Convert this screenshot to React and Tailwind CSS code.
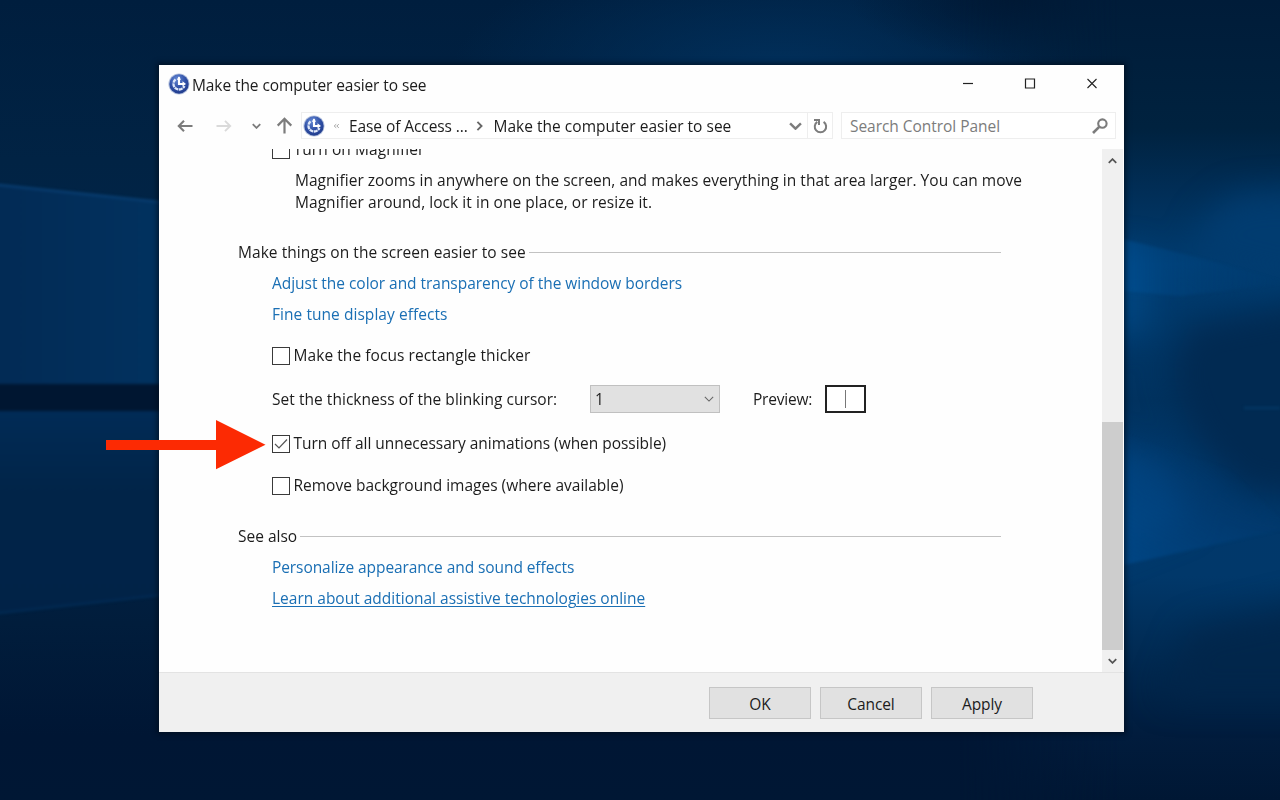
function Wallpaper() {
  return (
    <svg className="absolute inset-0 h-full w-full" viewBox="0 0 1280 800" preserveAspectRatio="none" aria-hidden="true">
      <defs>
        <linearGradient id="base" x1="0" y1="0" x2="0" y2="1">
          <stop offset="0" stopColor="#001e3e" />
          <stop offset="0.2" stopColor="#012344" />
          <stop offset="0.5" stopColor="#01264c" />
          <stop offset="0.78" stopColor="#011d3c" />
          <stop offset="0.92" stopColor="#001634" />
          <stop offset="1" stopColor="#001734" />
        </linearGradient>
        <linearGradient id="leftBeam" x1="0" y1="0" x2="1" y2="0">
          <stop offset="0" stopColor="#022a54" />
          <stop offset="1" stopColor="#013260" />
        </linearGradient>
        <linearGradient id="lowBeam" x1="0" y1="0" x2="0" y2="1">
          <stop offset="0" stopColor="#012b56" />
          <stop offset="0.4" stopColor="#012448" />
          <stop offset="1" stopColor="#012247" />
        </linearGradient>
        <linearGradient id="rightSky" x1="0" y1="0" x2="0" y2="1">
          <stop offset="0" stopColor="#001c39" />
          <stop offset="0.16" stopColor="#00223f" />
          <stop offset="0.24" stopColor="#012e57" />
          <stop offset="0.33" stopColor="#013c70" />
          <stop offset="0.5" stopColor="#01325f" />
          <stop offset="0.6" stopColor="#01386b" />
          <stop offset="0.72" stopColor="#01386a" />
          <stop offset="0.82" stopColor="#012a52" />
          <stop offset="0.92" stopColor="#011c3d" />
          <stop offset="1" stopColor="#001734" />
        </linearGradient>
        <linearGradient id="fadeIn" gradientUnits="userSpaceOnUse" x1="960" y1="0" x2="1120" y2="0">
          <stop offset="0" stopColor="#000" />
          <stop offset="1" stopColor="#fff" />
        </linearGradient>
        <mask id="rightMask" maskUnits="userSpaceOnUse" x="0" y="0" width="1280" height="800">
          <rect x="960" width="320" height="800" fill="url(#fadeIn)" />
        </mask>
        <linearGradient id="upperRay" x1="0" y1="0" x2="1" y2="0">
          <stop offset="0" stopColor="#00559c" />
          <stop offset="1" stopColor="#01407a" stopOpacity="0" />
        </linearGradient>
        <linearGradient id="lowerRay" gradientUnits="userSpaceOnUse" x1="1130" y1="565" x2="1200" y2="440">
          <stop offset="0" stopColor="#004d92" />
          <stop offset="0.5" stopColor="#01427f" stopOpacity="0.7" />
          <stop offset="1" stopColor="#01386b" stopOpacity="0" />
        </linearGradient>
        <radialGradient id="topGlow" cx="0.5" cy="0.5" r="0.5">
          <stop offset="0" stopColor="#01305c" />
          <stop offset="1" stopColor="#01305c" stopOpacity="0" />
        </radialGradient>
        <radialGradient id="cornerShade" cx="0.5" cy="0.5" r="0.5">
          <stop offset="0" stopColor="#001630" stopOpacity="0.8" />
          <stop offset="1" stopColor="#001630" stopOpacity="0" />
        </radialGradient>
        <filter id="soft" filterUnits="userSpaceOnUse" x="1000" y="0" width="400" height="900" colorInterpolationFilters="sRGB">
          <feGaussianBlur stdDeviation="16" />
        </filter>
        <filter id="edge" filterUnits="userSpaceOnUse" x="-50" y="-50" width="1400" height="900" colorInterpolationFilters="sRGB">
          <feGaussianBlur stdDeviation="1.4" />
        </filter>
      </defs>
      <rect width="1280" height="800" fill="url(#base)" />
      <ellipse cx="780" cy="75" rx="330" ry="130" fill="url(#topGlow)" />
      <ellipse cx="1020" cy="0" rx="170" ry="60" fill="url(#cornerShade)" />
      <g filter="url(#edge)">
        <path d="M-10 184L180 204V384H-10Z" fill="url(#leftBeam)" />
        <path d="M-10 384H180V411H-10Z" fill="#001631" />
        <path d="M-10 411H180V593L-10 614Z" fill="url(#lowBeam)" />
        <path d="M-10 184L180 204" stroke="#0a4278" strokeWidth="2" />
        <path d="M-10 614L180 593" stroke="#022d57" strokeWidth="2" />
      </g>
      <rect x="960" width="320" height="800" fill="url(#rightSky)" mask="url(#rightMask)" />
      <g filter="url(#soft)">
        <path d="M1205 220L1235 195L1320 190V290L1190 260Z" fill="#013c70" />
        <path d="M1190 325L1320 300V500L1240 490L1190 430L1170 370Z" fill="#012a52" />
        <path d="M1100 250L1150 255L1150 330L1100 340Z" fill="#01457f" />
        <path d="M1090 440L1160 460L1190 520L1090 560Z" fill="#01447f" />
        <path d="M1190 630L1320 600V700H1160Z" fill="#01264a" opacity="0.8" />
      </g>
      <g filter="url(#edge)">
        <path d="M1110 236L1192 256L1290 283L1180 296L1110 290Z" fill="url(#upperRay)" opacity="0.5" />
        <path d="M1110 430L1230 470L1290 528L1110 568Z" fill="url(#lowerRay)" opacity="0.6" />
        <path d="M1244 408H1280" stroke="#07406f" strokeWidth="1.5" />
      </g>
    </svg>
  );
}

function EaseIcon({ className }) {
  return (
    <svg className={className} viewBox="0 0 22 22" aria-hidden="true">
      <defs>
        <radialGradient id="orb" cx="0.4" cy="0.25" r="0.8">
          <stop offset="0" stopColor="#6488d4" />
          <stop offset="0.55" stopColor="#3050a6" />
          <stop offset="1" stopColor="#1f3a8a" />
        </radialGradient>
      </defs>
      <circle cx="11" cy="11" r="10.6" fill="#b4c1dd" />
      <circle cx="11" cy="11" r="9.7" fill="url(#orb)" />
      <path d="M7.500 6.400A5.700 5.700 0 1 0 16.400 13" fill="none" stroke="#dfe8f8" strokeWidth="2.3" strokeDasharray="3.800 0.600" />
      <path d="M11 4.200V11H15.500" fill="none" stroke="#fff" strokeWidth="2.1" />
      <path d="M14.500 8.200L18 11L14.500 13.600Z" fill="#fff" />
      <path d="M8.800 6.800L11 3.200L13 6.800Z" fill="#fff" />
    </svg>
  );
}

function Chevron({ className, d = "M1 1L6 6L11 1", box = "0 0 12 7", sw = 2 }) {
  return (
    <svg className={className} viewBox={box} fill="none" stroke="currentColor" strokeWidth={sw} aria-hidden="true">
      <path d={d} />
    </svg>
  );
}

function TitleBar() {
  return (
    <div className="flex h-[38px] shrink-0 items-center pl-[9px] pr-[26px]">
      <EaseIcon className="mr-[2px] h-[22px] w-[22px] shrink-0" />
      <span className="pt-px tracking-[-0.09px]">Make the computer easier to see</span>
      <div className="ml-auto flex items-center text-[#222]">
        <svg className="h-[12px] w-[12px]" viewBox="0 0 12 12" stroke="currentColor" strokeWidth="1.2" fill="none"><path d="M1 5.500H11" /></svg>
        <svg className="ml-[50px] h-[12px] w-[12px]" viewBox="0 0 12 12" stroke="currentColor" strokeWidth="1.2" fill="none"><path d="M1.500 1H10.500V10H1.500Z" /></svg>
        <svg className="ml-[50px] h-[12px] w-[12px]" viewBox="0 0 12 12" stroke="currentColor" strokeWidth="1.1" fill="none"><path d="M1.500 1L10.500 10M10.500 1L1.500 10" /></svg>
      </div>
    </div>
  );
}

function NavBar() {
  return (
    <div className="flex h-[46px] shrink-0 items-start pl-[18px] pr-[8px] pt-[9px] text-[#7c7c7c]">
      <div className="flex h-[27px] items-center">
        <svg className="h-[14px] w-[16px]" viewBox="0 0 16 14" stroke="currentColor" strokeWidth="2.1" fill="none"><path d="M15.500 7H1.800M7 1.800L1.800 7L7 12.200" /></svg>
        <svg className="ml-[23px] h-[14px] w-[16px] text-[#dadada]" viewBox="0 0 16 14" stroke="currentColor" strokeWidth="1.900" fill="none"><path d="M0.500 7H14.200M9 1.800L14.200 7L9 12.200" /></svg>
        <Chevron className="ml-[20px] h-[6px] w-[9px]" sw={2.4} />
        <svg className="ml-[15px] h-[17px] w-[17px]" viewBox="0 0 16 17" stroke="currentColor" strokeWidth="2.2" fill="none"><path d="M8 16.500V2M1.200 8.600L8 1.800L14.800 8.600" /></svg>
      </div>
      <div className="ml-[8px] flex h-[27px] w-[532px] items-center border border-[#eeeeee] bg-white text-[#1c1c1c]">
        <EaseIcon className="ml-px h-[22px] w-[22px] shrink-0" />
        <Chevron className="ml-[8px] h-[6px] w-[7px] text-[#999]" d="M5.500 1L2 4L5.500 7M10 1L6.500 4L10 7" box="0 0 12 8" sw={1.5} />
        <span className="ml-[9px] w-[120px] shrink-0 whitespace-nowrap tracking-[-0.08px]">Ease of Access ...</span>
        <Chevron className="ml-[7px] h-[10px] w-[7px] text-[#666]" d="M1 1L6 6L1 11" box="0 0 7 12" sw={2.2} />
        <span className="ml-[10.5px] whitespace-nowrap tracking-[0.02px]">Make the computer easier to see</span>
        <Chevron className="ml-auto h-[8px] w-[13px] text-[#7c7c7c]" sw={2.2} />
        <div className="ml-[5px] flex h-full w-[25px] items-center justify-center border-l border-[#eeeeee] text-[#7c7c7c]">
          <svg className="h-[16px] w-[15px]" viewBox="0 0 15 16" stroke="currentColor" strokeWidth="2" fill="none">
            <path d="M10.600 3.800A5.700 5.700 0 1 1 4.300 3.800" />
            <path d="M1 1.900H6V7" />
          </svg>
        </div>
      </div>
      <div className="ml-[8px] flex h-[27px] flex-1 items-center border border-[#eeeeee] bg-white pl-[8px] pr-[7px]">
        <span className="tracking-[-0.04px]">Search Control Panel</span>
        <svg className="ml-auto h-[16px] w-[16px]" viewBox="0 0 16 16" stroke="currentColor" fill="none">
          <circle cx="10.400" cy="5.600" r="4.200" strokeWidth="2.1" />
          <path d="M7.200 8.800L1 15" strokeWidth="2.6" />
        </svg>
      </div>
    </div>
  );
}

function CheckRow({ label, checked, className }) {
  return (
    <div className={className}>
      <div className="mt-[2px] flex h-[18px] w-[18px] shrink-0 items-center justify-center border-[1.5px] border-[#3a3a3a] bg-white">
        {checked && (
          <svg className="h-[12px] w-[14px]" viewBox="0 0 14 12" stroke="#555" strokeWidth="1.2" fill="none"><path d="M1 6L5 10L13 1.500" /></svg>
        )}
      </div>
      <span className="ml-[3.5px] whitespace-nowrap">{label}</span>
    </div>
  );
}

function SectionHeading({ children, className }) {
  return (
    <div className={className}>
      <span className="whitespace-nowrap">{children}</span>
      <div className="ml-[3px] h-px flex-1 bg-[#c2c2c2]" />
    </div>
  );
}

function Content() {
  return (
    <div className="flex min-h-0 flex-1 overflow-hidden">
      <div className="w-[943px] overflow-hidden pl-[79px]">
        <CheckRow className="-mt-[11px] ml-[34px] flex h-[22px] items-center tracking-[0.1px]" label="Turn on Magnifier" />
        <p className="ml-[57px] mt-[10px] whitespace-nowrap leading-[21.5px]">
          <span className="tracking-[0.02px]">Magnifier zooms in anywhere on the screen, and makes everything in that area larger. You can move</span>
          <br />
          <span className="tracking-[0.05px]">Magnifier around, lock it in one place, or resize it.</span>
        </p>
        <SectionHeading className="mt-[28px] flex h-[22px] w-[763px] items-center tracking-[0.05px]">Make things on the screen easier to see</SectionHeading>
        <div className="ml-[34px] mt-[9px] flex flex-col items-start gap-[9px] text-[#1a6fb4]">
          <a className="h-[22px] tracking-[-0.04px]">Adjust the color and transparency of the window borders</a>
          <a className="h-[22px] tracking-[0.05px]">Fine tune display effects</a>
        </div>
        <CheckRow className="ml-[34px] mt-[19px] flex h-[22px] items-center tracking-[0.07px]" label="Make the focus rectangle thicker" />
        <div className="ml-[34px] mt-[18px] flex h-[29px] items-center">
          <span className="w-[318px] whitespace-nowrap tracking-[0.04px]">Set the thickness of the blinking cursor:</span>
          <div className="flex h-[28px] w-[130px] items-center justify-between border border-[#c0c0c0] bg-[#e1e1e1] pl-[4px] pr-[5px]">
            <span>1</span>
            <Chevron className="h-[6px] w-[10px] text-[#666]" sw={1.3} />
          </div>
          <span className="ml-[33px] w-[72px] tracking-[-0.2px]">Preview:</span>
          <div className="flex h-[28px] w-[41px] items-center justify-center border-2 border-[#222] bg-white">
            <div className="h-[18px] w-px bg-[#777]" />
          </div>
        </div>
        <CheckRow className="ml-[34px] mt-[19px] flex h-[22px] items-center tracking-[-0.03px]" label="Turn off all unnecessary animations (when possible)" checked />
        <CheckRow className="ml-[34px] mt-[20px] flex h-[22px] items-center" label="Remove background images (where available)" />
        <SectionHeading className="mt-[29px] flex h-[22px] w-[763px] items-center">See also</SectionHeading>
        <div className="ml-[34px] mt-[9px] flex flex-col items-start gap-[9px] text-[#1a6fb4]">
          <a className="h-[22px] tracking-[-0.08px]">Personalize appearance and sound effects</a>
          <a className="h-[22px] underline decoration-1 underline-offset-2">Learn about additional assistive technologies online</a>
        </div>
      </div>
      <div className="flex w-[21px] flex-col items-center bg-[#f0f0f0] text-[#555]">
        <div className="flex h-[24px] items-center"><Chevron className="h-[6px] w-[9px]" d="M1 6L6 1L11 6" sw={2.3} /></div>
        <div className="mt-[249px] h-[228px] w-full bg-[#cdcdcd]" />
        <div className="flex h-[22px] items-center"><Chevron className="h-[6px] w-[9px]" sw={2.3} /></div>
      </div>
    </div>
  );
}

function Footer() {
  return (
    <div className="flex h-[60px] shrink-0 justify-end gap-[9px] border-t border-[#e3e3e3] bg-[#f0f0f0] pr-[91px] pt-[14px]">
      {["OK", "Cancel", "Apply"].map((label) => (
        <button key={label} className="flex h-[32px] w-[102px] items-center justify-center border border-[#c6c6c6] bg-[#e1e1e1] pt-px tracking-[-0.1px]">{label}</button>
      ))}
    </div>
  );
}

export default function App() {
  return (
    <main className="relative h-[800px] w-[1280px] overflow-hidden bg-[#01203f] pl-[159px] pt-[65px] font-['Open_Sans','Noto_Sans',sans-serif] text-[15.5px] leading-[22px] text-[#1c1c1c]">
      <Wallpaper />
      <section className="relative flex h-[667px] w-[965px] flex-col bg-[#fefefe] shadow-[0_0_5px_2px_rgba(0,10,25,0.65)]">
        <TitleBar />
        <NavBar />
        <Content />
        <Footer />
      </section>
      <svg className="absolute left-[106px] top-[420px] h-[50px] w-[160px]" viewBox="0 0 160 50" aria-hidden="true">
        <path d="M0 20H110V0L159.500 24.700L110 49.300V30H0Z" fill="#fc2a03" />
      </svg>
    </main>
  );
}
